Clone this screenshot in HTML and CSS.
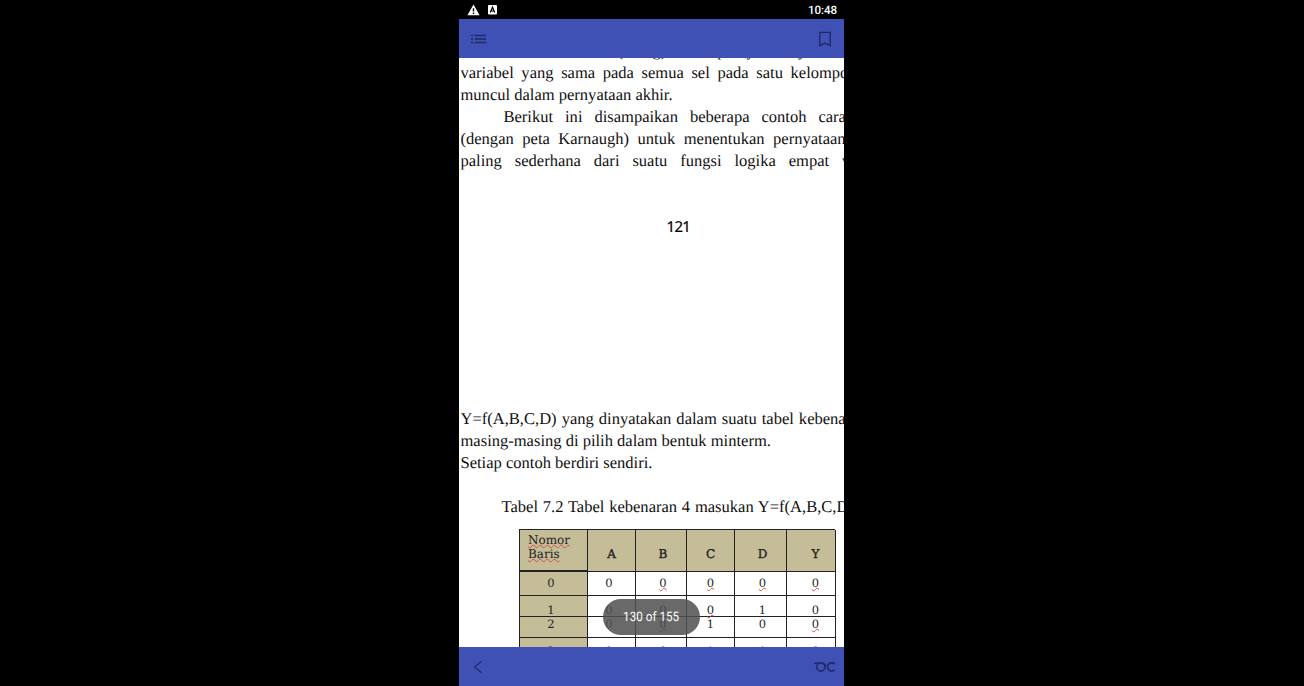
FILE: index.html
```html
<!DOCTYPE html>
<html lang="id">
<head>
<meta charset="utf-8">
<title>Reader</title>
<link rel="stylesheet" href="styles.css">
</head>
<body>
<div class="phone">
  <header class="status">
    <svg class="warn" width="13" height="12" viewBox="0 0 13 12"><path d="M6.5 .6 12.6 11.2H.4z" fill="#fff"/><path d="M6.5 4.2v3.4M6.5 8.5v1.4" stroke="#000" stroke-width="1.4"/></svg>
    <svg width="9" height="10" viewBox="0 0 9 10"><rect width="9" height="9.6" rx="1" fill="#fff"/><path d="M2.3 7.6 4.5 2.2l2.2 5.4M3.1 6h2.8" fill="none" stroke="#000" stroke-width="1.2"/></svg>
    <span class="time">10:48</span>
  </header>
  <nav class="bar">
    <svg width="16" height="10" viewBox="0 0 16 10" fill="none" stroke="#1f2a69" stroke-width="1.5"><path d="M0 1.5h2M3.5 1.5H15M0 5h2M3.5 5H15M0 8.5h2M3.5 8.5H15"/></svg>
    <svg width="12" height="16" viewBox="0 0 12 16" fill="none" stroke="#1f2a69" stroke-width="1.4"><path d="M.8 1.4h10.4v13.2L6 12 .8 14.6z"/></svg>
  </nav>
  <main class="page">
    <p class="line l0">(ruang) maka pernyataannya</p>
    <p class="line l1">variabel yang sama pada semua sel pada satu kelompok</p>
    <p class="line">muncul dalam pernyataan akhir.</p>
    <p class="line l2">Berikut ini disampaikan beberapa contoh cara</p>
    <p class="line l3">(dengan peta Karnaugh) untuk menentukan pernyataan</p>
    <p class="line l4">paling sederhana dari suatu fungsi logika empat variabel</p>
    <p class="folio">121</p>
    <p class="line l5">Y=f(A,B,C,D) yang dinyatakan dalam suatu tabel kebenaran</p>
    <p class="line">masing-masing di pilih dalam bentuk minterm.</p>
    <p class="line">Setiap contoh berdiri sendiri.</p>
    <p class="line caption">Tabel 7.2 Tabel kebenaran 4 masukan Y=f(A,B,C,D)</p>
    <div class="table">
      <div class="c tan first"><u>Nomor</u><u>Baris</u></div><div class="c tan h">A</div><div class="c tan h b">B</div><div class="c tan h">C</div><div class="c tan h b">D</div><div class="c tan h y">Y</div>
      <div class="c tan n">0</div><div class="c a">0</div><div class="c b"><u>0</u></div><div class="c"><u>0</u></div><div class="c b"><u>0</u></div><div class="c y"><u>0</u></div>
      <div class="c tan n low">1</div><div class="c a low">0</div><div class="c b low">0</div><div class="c low"><u>0</u></div><div class="c b low">1</div><div class="c y low">0</div>
      <div class="c tan n up">2</div><div class="c a up">0</div><div class="c b up"><u>0</u></div><div class="c up">1</div><div class="c b up">0</div><div class="c y up"><u>0</u></div>
      <div class="c tan n last">3</div><div class="c a last">0</div><div class="c b last">0</div><div class="c last">1</div><div class="c b last">1</div><div class="c y last">0</div>
    </div>
    <div class="toast"><span>130 of 155</span></div>
  </main>
  <nav class="bar bottom">
    <svg width="10" height="14" viewBox="0 0 10 14" fill="none" stroke="#1f2a69" stroke-width="1.1"><path d="M8.6 1.2 1.4 7l7.2 5.8"/></svg>
    <svg class="glasses" width="22" height="12" viewBox="0 0 22 12" fill="none" stroke="#1f2a69" stroke-width="1.6"><circle cx="6.8" cy="6" r="4.1"/><path d="M0 2.2h7.5q3.4 0 4.6 3M20.6 3.2a4.1 4.1 0 1 0 0 5.6M17 1.9h3.8"/></svg>
  </nav>
</div>
</body>
</html>
```

FILE: styles.css
```css
* { box-sizing: border-box; }
body { margin: 0; background: #000; text-rendering: geometricPrecision; overflow: hidden; }
p { margin: 0; }
.phone { width: 385px; height: 686px; margin-left: 459px; display: flex; flex-direction: column; overflow: hidden; }
.status { height: 19px; flex: none; display: flex; align-items: center; gap: 8px; padding: 0 7px 0 8px; background: #000; }
.time { margin-left: auto; color: #fff; font: 500 11.6px/19px Roboto, sans-serif; letter-spacing: -.1px; padding-top: 1px; }
.bar { height: 39px; flex: none; display: flex; align-items: center; justify-content: space-between; padding: 0 13px 0 12px; background: #3f51b5; }
.bottom { padding: 0 8px 0 14px; }
.page { height: 589px; flex: none; position: relative; overflow: hidden; background: #fff; padding-left: 1.5px; color: #111; }
.line { font: 16.55px/22px "Liberation Serif", serif; white-space: nowrap; }
.l0 { margin-top: -18px; padding-left: 157px; word-spacing: 3.5px; }
.l1 { word-spacing: 3.5px; }
.l2 { padding-left: 43px; word-spacing: 7.8px; }
.l3 { word-spacing: 4.4px; }
.l4 { word-spacing: 8.8px; }
.l5 { margin-top: 236px; word-spacing: .9px; }
.folio { height: 0; padding: 44px 0 0 206px; margin-bottom: -44px; font: 15px/22px "Noto Sans", sans-serif; letter-spacing: -.7px; color: #000; -webkit-text-stroke: .2px #000; }
.caption { margin-top: 22px; padding-left: 41px; word-spacing: .65px; }
.table { width: 316px; margin: 11px 0 0 58.5px; display: grid; grid-template-columns: 68px 48px 51px 48px 52px 49px; grid-template-rows: 42px 24px 21px 21px 24px; border-top: 1px solid #222; border-left: 1px solid #222; font: 11.5px/14px "DejaVu Serif", serif; color: #222; }
.c { border-right: 1px solid #222; border-bottom: 1px solid #222; display: flex; align-items: center; justify-content: center; padding-bottom: 1px; }
.tan { background: #c4bd97; }
.first { flex-direction: column; align-items: flex-start; padding: 0 0 6px 8px; border-bottom-width: 2px; font-size: 12px; }
.h { padding-top: 8px; font-size: 12px; -webkit-text-stroke: .35px #222; }
.b { padding-left: 4px; }
.y { padding-left: 9px; }
.n { padding-right: 5px; }
.a { padding-right: 5px; }
.low { padding-top: 9px; }
.up { padding-bottom: 6px; }
.last { padding-top: 4px; }
u { text-decoration: underline wavy #d2504c .8px; text-decoration-skip-ink: none; text-underline-offset: 0; }
.toast { position: absolute; left: 144px; top: 541px; width: 97px; height: 36px; border-radius: 18px; background: rgba(80, 80, 80, .86); color: #fff; font: 13px/38px Roboto, sans-serif; text-align: center; }
.toast span { display: inline-block; transform: scaleX(.9); }
```
